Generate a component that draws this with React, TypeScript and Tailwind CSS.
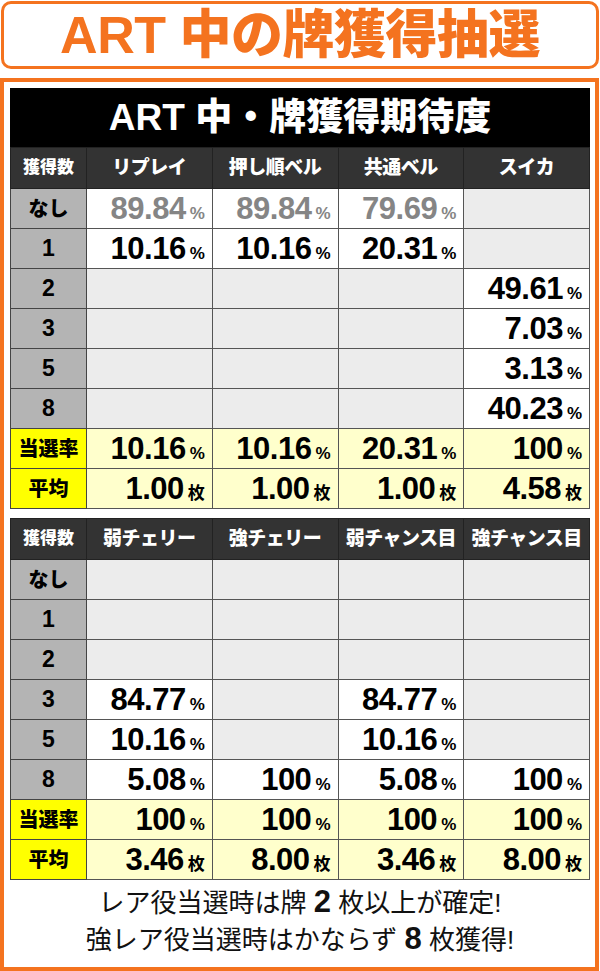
import React from "react";

type Cell = { v: string; u?: "%" | "枚"; grey?: boolean } | null;
type Row = { label: string; kind: "grey" | "yellow"; cells: Cell[] };

const p = (v: string, grey = false): Cell => ({ v, u: "%", grey });
const m = (v: string): Cell => ({ v, u: "枚" });

const table1: { cols: string[]; rows: Row[] } = {
  cols: ["リプレイ", "押し順ベル", "共通ベル", "スイカ"],
  rows: [
    { label: "なし", kind: "grey", cells: [p("89.84", true), p("89.84", true), p("79.69", true), null] },
    { label: "1", kind: "grey", cells: [p("10.16"), p("10.16"), p("20.31"), null] },
    { label: "2", kind: "grey", cells: [null, null, null, p("49.61")] },
    { label: "3", kind: "grey", cells: [null, null, null, p("7.03")] },
    { label: "5", kind: "grey", cells: [null, null, null, p("3.13")] },
    { label: "8", kind: "grey", cells: [null, null, null, p("40.23")] },
    { label: "当選率", kind: "yellow", cells: [p("10.16"), p("10.16"), p("20.31"), p("100")] },
    { label: "平均", kind: "yellow", cells: [m("1.00"), m("1.00"), m("1.00"), m("4.58")] },
  ],
};

const table2: { cols: string[]; rows: Row[] } = {
  cols: ["弱チェリー", "強チェリー", "弱チャンス目", "強チャンス目"],
  rows: [
    { label: "なし", kind: "grey", cells: [null, null, null, null] },
    { label: "1", kind: "grey", cells: [null, null, null, null] },
    { label: "2", kind: "grey", cells: [null, null, null, null] },
    { label: "3", kind: "grey", cells: [p("84.77"), null, p("84.77"), null] },
    { label: "5", kind: "grey", cells: [p("10.16"), null, p("10.16"), null] },
    { label: "8", kind: "grey", cells: [p("5.08"), p("100"), p("5.08"), p("100")] },
    { label: "当選率", kind: "yellow", cells: [p("100"), p("100"), p("100"), p("100")] },
    { label: "平均", kind: "yellow", cells: [m("3.46"), m("8.00"), m("3.46"), m("8.00")] },
  ],
};

const ValueCell = ({ cell, yellow }: { cell: Cell; yellow: boolean }) => {
  if (!cell) {
    return <td className="h-10 border border-[#555] bg-[#ececec]" />;
  }
  return (
    <td
      className={`h-10 border border-[#555] pr-[7px] text-right leading-none ${
        yellow ? "bg-[#ffffcc]" : "bg-white"
      } ${cell.grey ? "text-[#858585]" : "text-black"}`}
    >
      <span className="text-[31px] font-bold tracking-[-0.5px]">{cell.v}</span>
      <span className="ml-[4px] text-[17px] font-bold">{cell.u}</span>
    </td>
  );
};

const DataTable = ({ cols, rows }: { cols: string[]; rows: Row[] }) => (
  <table className="w-full table-fixed border-collapse">
    <colgroup>
      <col className="w-[76px]" />
      <col />
      <col />
      <col />
      <col />
    </colgroup>
    <thead>
      <tr className="h-[41px] bg-[#333333] text-white">
        <th className="border border-[#222] text-[17px] font-black">獲得数</th>
        {cols.map((c) => (
          <th key={c} className="border border-[#222] text-[19px] font-black tracking-[-0.5px]">
            {c}
          </th>
        ))}
      </tr>
    </thead>
    <tbody>
      {rows.map((r) => (
        <tr key={r.label}>
          <td
            className={`h-10 border border-[#444] text-center font-black text-black ${
              r.kind === "yellow" ? "bg-[#ffff00]" : "bg-[#b4b4b4]"
            } ${/^\d$/.test(r.label) ? "text-[23px]" : "text-[20px]"}`}
          >
            {r.label}
          </td>
          {r.cells.map((c, i) => (
            <ValueCell key={i} cell={c} yellow={r.kind === "yellow"} />
          ))}
        </tr>
      ))}
    </tbody>
  </table>
);

export default function App() {
  return (
    <div className="h-[971px] w-[600px] overflow-hidden bg-white font-['Liberation_Sans','Noto_Sans_CJK_JP',sans-serif]">
      <div className="mx-[1px] mt-[1px] flex h-[68px] items-center justify-center rounded-[10px] border-[3px] border-[#f4731f]">
        <h1 className="text-[52px] font-black leading-none tracking-[-0.5px] text-[#f4731f]">
          ART 中の牌獲得抽選
        </h1>
      </div>

      <div className="mr-[1px] mt-[9px] flex h-[893px] flex-col border-4 border-[#f4731f] pt-[6px] pl-[6px] pr-[5px]">
        <div className="flex h-[59px] items-center justify-center bg-black">
          <h2 className="text-[37px] font-black leading-none text-white">ART 中・牌獲得期待度</h2>
        </div>
        <DataTable cols={table1.cols} rows={table1.rows} />
        <div className="h-[9px]" />
        <DataTable cols={table2.cols} rows={table2.rows} />
        <div className="flex flex-1 flex-col items-center justify-center pb-[6px] text-[26px] leading-[35px] text-[#111]">
          <p>
            レア役当選時は牌 <span className="text-[31px] font-bold">2</span> 枚以上が確定!
          </p>
          <p>
            強レア役当選時はかならず <span className="text-[31px] font-bold">8</span> 枚獲得!
          </p>
        </div>
      </div>
    </div>
  );
}
